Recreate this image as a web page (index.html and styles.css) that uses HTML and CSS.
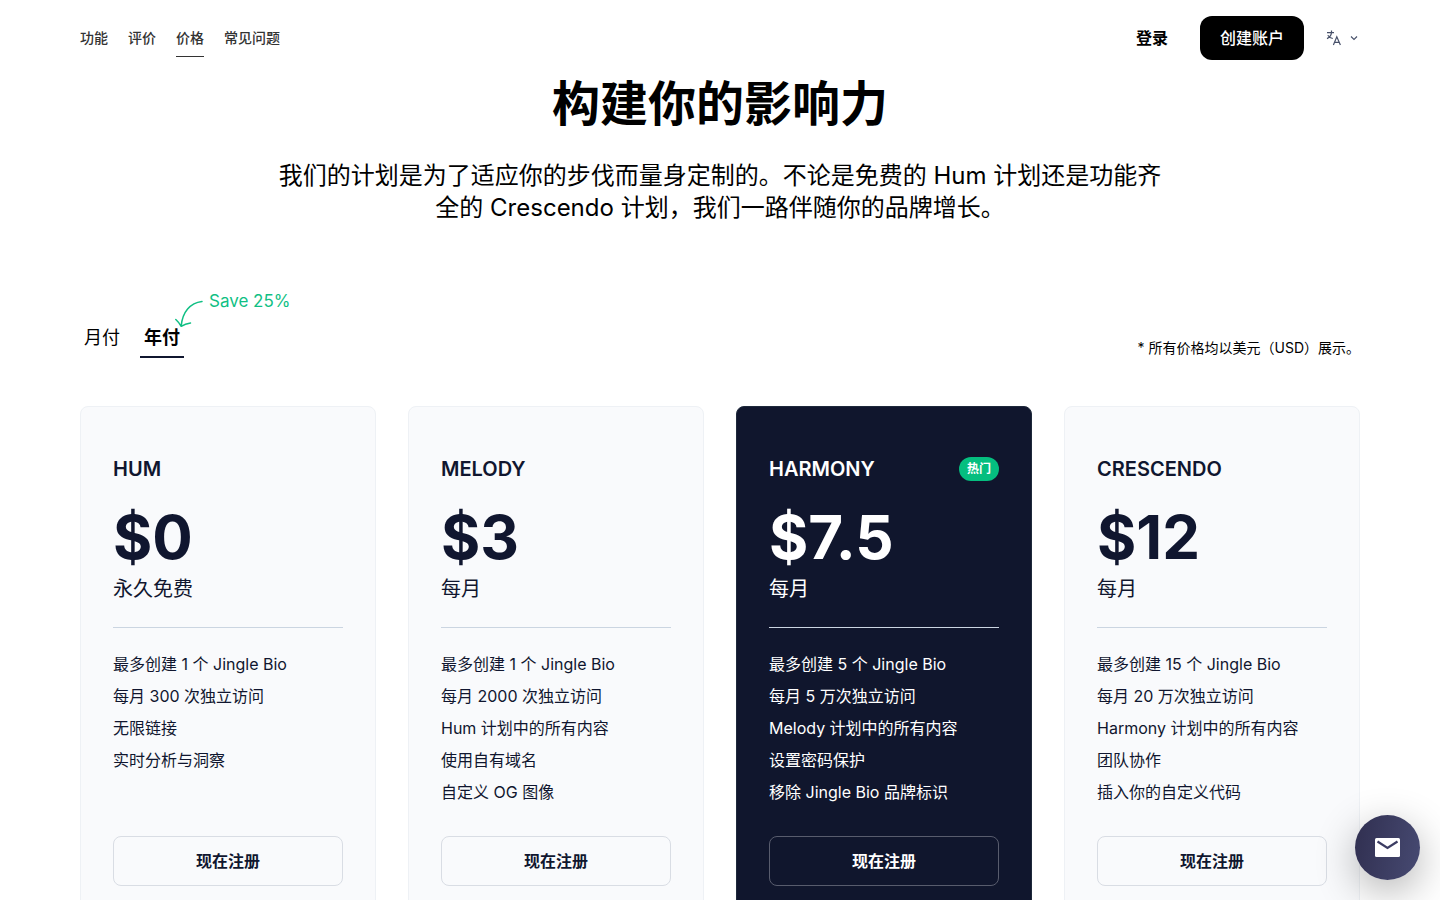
FILE: index.html
```html
<!DOCTYPE html>
<html lang="zh-CN">
<head>
<meta charset="utf-8">
<meta name="viewport" content="width=device-width, initial-scale=1">
<title>价格</title>
<link rel="stylesheet" href="styles.css">
</head>
<body>
<header class="header">
  <nav class="nav">
    <a class="nav-link" href="#features">功能</a>
    <a class="nav-link" href="#reviews">评价</a>
    <a class="nav-link nav-link-active" href="#pricing">价格</a>
    <a class="nav-link" href="#faq">常见问题</a>
  </nav>
  <div class="actions">
    <a class="login" href="#login">登录</a>
    <a class="create" href="#signup">创建账户</a>
    <button class="lang" type="button" aria-label="语言">
      <svg width="16" height="16" viewBox="0 0 16 16" fill="none" stroke="currentColor" stroke-width="1.2"><path d="M1 2.600h7M5.500.600v2C5.200 5.400 3.600 7.400 1 8.600M1.800 5.200C3 7.200 4.600 8.200 6.800 8.500M7.400 15l3.400-8.200L14.400 15M8.600 12.400h4.800"/></svg>
      <svg width="8" height="8" viewBox="0 0 8 8" fill="none" stroke="currentColor" stroke-width="1.100"><path d="M1 2.500l3 3 3-3"/></svg>
    </button>
  </div>
</header>
<main class="page" id="pricing">
  <section class="hero">
    <h1 class="hero-title">构建你的影响力</h1>
    <p class="hero-text">我们的计划是为了适应你的步伐而量身定制的。不论是免费的 Hum 计划还是功能齐全的 Crescendo 计划，我们一路伴随你的品牌增长。</p>
  </section>
  <div class="toolbar">
    <div class="tabs">
      <button class="tab" type="button">月付</button>
      <button class="tab tab-active" type="button">年付</button>
      <div class="save">
        <svg width="30" height="28" viewBox="0 0 30 28" fill="none" stroke="currentColor" stroke-width="1.500" stroke-linecap="round" stroke-linejoin="round"><path d="M27 1.500C15 3 7.500 12 6.200 26M.800 19.500C3 21.500 4.800 23.700 6.200 26.300C9 24.500 12 23.500 15.500 23"/></svg>
        <span>Save 25%</span>
      </div>
    </div>
    <p class="note">* 所有价格均以美元（USD）展示。</p>
  </div>
  <section class="plans">
    <article class="plan">
      <div class="plan-head"><h2 class="plan-name">HUM</h2></div>
      <p class="price">$0</p>
      <p class="period">永久免费</p>
      <ul class="features">
        <li>最多创建 1 个 Jingle Bio</li>
        <li>每月 300 次独立访问</li>
        <li>无限链接</li>
        <li>实时分析与洞察</li>
      </ul>
      <a class="signup" href="#signup">现在注册</a>
    </article>
    <article class="plan">
      <div class="plan-head"><h2 class="plan-name">MELODY</h2></div>
      <p class="price">$3</p>
      <p class="period">每月</p>
      <ul class="features">
        <li>最多创建 1 个 Jingle Bio</li>
        <li>每月 2000 次独立访问</li>
        <li>Hum 计划中的所有内容</li>
        <li>使用自有域名</li>
        <li>自定义 OG 图像</li>
      </ul>
      <a class="signup" href="#signup">现在注册</a>
    </article>
    <article class="plan plan-dark">
      <div class="plan-head"><h2 class="plan-name">HARMONY</h2><span class="badge">热门</span></div>
      <p class="price">$7.5</p>
      <p class="period">每月</p>
      <ul class="features">
        <li>最多创建 5 个 Jingle Bio</li>
        <li>每月 5 万次独立访问</li>
        <li>Melody 计划中的所有内容</li>
        <li>设置密码保护</li>
        <li>移除 Jingle Bio 品牌标识</li>
      </ul>
      <a class="signup" href="#signup">现在注册</a>
    </article>
    <article class="plan">
      <div class="plan-head"><h2 class="plan-name">CRESCENDO</h2></div>
      <p class="price">$12</p>
      <p class="period">每月</p>
      <ul class="features">
        <li>最多创建 15 个 Jingle Bio</li>
        <li>每月 20 万次独立访问</li>
        <li>Harmony 计划中的所有内容</li>
        <li>团队协作</li>
        <li>插入你的自定义代码</li>
      </ul>
      <a class="signup" href="#signup">现在注册</a>
    </article>
  </section>
</main>
<button class="chat" type="button" aria-label="联系我们">
  <svg width="25" height="19" viewBox="0 0 25 19"><rect width="25" height="19" rx="1.500" fill="#fff"/><path d="M2.500 3.500L12.500 10L22.500 3.500" fill="none" stroke="#3b3c62" stroke-width="2.200"/></svg>
</button>
</body>
</html>
```
FILE: styles.css
```css
* { box-sizing: border-box; }
body {
  margin: 0;
  background: #fff;
  color: #000;
  font-family: Inter, "Noto Sans CJK SC", sans-serif;
  font-size: 16px;
  line-height: 24px;
}
h1, h2, p, ul { margin: 0; padding: 0; }
a { color: inherit; text-decoration: none; }
button { border: 0; padding: 0; background: none; font: inherit; color: inherit; cursor: pointer; }
svg { display: block; }

.header {
  position: sticky;
  top: 0;
  z-index: 2;
  display: flex;
  justify-content: space-between;
  align-items: center;
  max-width: 1440px;
  height: 76px;
  margin: 0 auto;
  padding: 0 80px;
}
.nav { display: flex; gap: 20px; }
.nav-link {
  padding: 8px 0;
  border-bottom: 1px solid transparent;
  color: #333;
  font-size: 14px;
  line-height: 20px;
  font-weight: 500;
}
.nav-link-active { border-color: #333; }
.actions { display: flex; align-items: center; }
.login { font-weight: 600; margin-right: 32px; }
.create {
  padding: 10px 20px;
  border-radius: 12px;
  background: #000;
  color: #fff;
  font-weight: 500;
}
.lang {
  display: flex;
  align-items: center;
  gap: 8px;
  margin-left: 22px;
  padding-right: 2px;
  color: #475069;
}

.page { max-width: 1440px; margin: 0 auto; padding: 0 80px 64px; }
.hero { max-width: 896px; margin: 0 auto; text-align: center; }
.hero-title { font-size: 48px; line-height: 56px; font-weight: 600; }
.hero-text { margin-top: 28px; font-size: 24px; line-height: 32px; }

.toolbar {
  display: flex;
  justify-content: space-between;
  align-items: flex-end;
  margin-top: 94px;
}
.tabs { position: relative; display: flex; gap: 16px; }
.tab {
  padding: 6px 4px 4px;
  border-bottom: 2px solid transparent;
  font-size: 18px;
  line-height: 28px;
}
.tab-active { border-color: #10162f; font-weight: 600; }
.save {
  position: absolute;
  left: 95px;
  top: -29px;
  display: flex;
  gap: 4px;
  color: #10bf84;
  font-size: 17px;
  line-height: 24px;
  white-space: nowrap;
}
.save svg { margin-top: 11px; }
.note { font-size: 14px; line-height: 20px; }

.plans {
  display: grid;
  grid-template-columns: repeat(4, 1fr);
  gap: 32px;
  margin-top: 48px;
}
.plan {
  display: flex;
  flex-direction: column;
  padding: 48px 32px 32px;
  border: 1px solid #eef1f5;
  border-radius: 8px;
  background: #f9fafc;
  color: #10162f;
}
.plan-dark { background: #10162d; border-color: #1e293b; color: #fff; }
.plan-head { display: flex; justify-content: space-between; align-items: center; height: 28px; }
.plan-name { font-size: 20px; line-height: 28px; font-weight: 600; }
.badge {
  padding: 4px 8px;
  border-radius: 12px;
  background: #05be7f;
  color: #fff;
  font-size: 12px;
  line-height: 16px;
  font-weight: 600;
}
.price { margin-top: 24px; font-size: 60px; line-height: 60px; font-weight: 700; }
.period {
  margin-bottom: 20px;
  padding: 8px 0 24px;
  border-bottom: 1px solid #cbd5e1;
  font-size: 20px;
  line-height: 28px;
}
.features { flex: 1; margin-bottom: 28px; list-style: none; line-height: 32px; }
.signup {
  padding: 12px;
  border: 1px solid #d9dde4;
  border-radius: 8px;
  text-align: center;
  font-weight: 600;
}
.plan-dark .signup { border-color: #585c6d; }

.chat {
  position: fixed;
  right: 20px;
  bottom: 20px;
  z-index: 3;
  display: grid;
  place-items: center;
  width: 65px;
  height: 65px;
  border-radius: 50%;
  background: linear-gradient(100deg, #302f50, #474a72);
  box-shadow: 0 12px 40px rgba(0, 0, 0, 0.3);
}
```
